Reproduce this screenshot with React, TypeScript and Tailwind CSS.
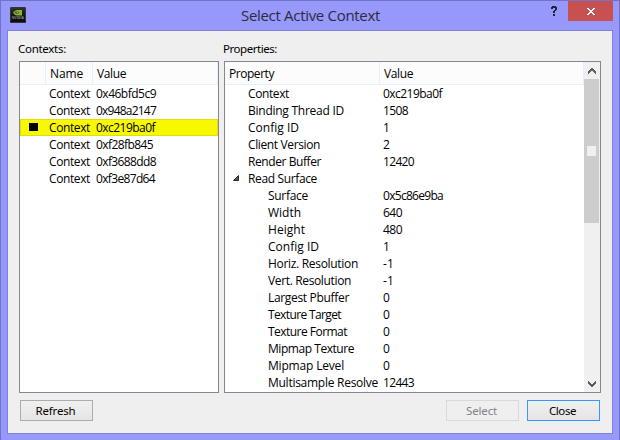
import { useLayoutEffect, useRef } from 'react';

type FitProps = { w: number; children: string; className?: string };

/* Text set to a given advance width by spreading the difference over its letters. */
function Fit({ w, children, className = '' }: FitProps) {
  const ref = useRef<HTMLSpanElement>(null);
  useLayoutEffect(() => {
    const el = ref.current;
    if (!el) return;
    el.style.letterSpacing = '0px';
    const natural = el.getBoundingClientRect().width;
    el.style.letterSpacing = `${(w - natural) / children.length}px`;
  }, [w, children]);
  return (
    <span ref={ref} className={`inline-block shrink-0 whitespace-pre ${className}`}>
      {children}
    </span>
  );
}

const contexts: [string, number][] = [
  ['0x46bfd5c9', 60],
  ['0x948a2147', 60],
  ['0xc219ba0f', 59],
  ['0xf28fb845', 57],
  ['0xf3688dd8', 60],
  ['0xf3e87d64', 59],
];

type Prop = { name: string; w: number; value?: string; vw?: number; child?: boolean };

const rows: Prop[] = [
  { name: 'Context', w: 41, value: '0xc219ba0f', vw: 59 },
  { name: 'Binding Thread ID', w: 96, value: '1508', vw: 25 },
  { name: 'Config ID', w: 51, value: '1', vw: 6 },
  { name: 'Client Version', w: 72, value: '2', vw: 6 },
  { name: 'Render Buffer', w: 73, value: '12420', vw: 31 },
  { name: 'Read Surface', w: 69 },
  { name: 'Surface', w: 40, value: '0x5c86e9ba', vw: 60 },
  { name: 'Width', w: 33, value: '640', vw: 19 },
  { name: 'Height', w: 37, value: '480', vw: 19 },
  { name: 'Config ID', w: 51, value: '1', vw: 6 },
  { name: 'Horiz. Resolution', w: 90, value: '-1', vw: 11 },
  { name: 'Vert. Resolution', w: 83, value: '-1', vw: 11 },
  { name: 'Largest Pbuffer', w: 81, value: '0', vw: 6 },
  { name: 'Texture Target', w: 73, value: '0', vw: 6 },
  { name: 'Texture Format', w: 79, value: '0', vw: 6 },
  { name: 'Mipmap Texture', w: 86, value: '0', vw: 6 },
  { name: 'Mipmap Level', w: 76, value: '0', vw: 6 },
  { name: 'Multisample Resolve', w: 110, value: '12443', vw: 31 },
];
const properties = rows.map((p, i) => ({ ...p, child: i > 5 }));

function Logo() {
  return (
    <svg width="16" height="16" viewBox="0 0 16 16" className="mt-[7px] ml-[10px] shrink-0">
      <defs>
        <linearGradient id="badge" x1="0" y1="0" x2="0" y2="1">
          <stop offset="0" stopColor="#343634" />
          <stop offset="0.5" stopColor="#151715" />
          <stop offset="1" stopColor="#0a0b0a" />
        </linearGradient>
      </defs>
      <rect width="16" height="16" rx="1.5" fill="url(#badge)" />
      <rect x="0.5" y="0.5" width="15" height="15" rx="1" fill="none" stroke="#333633" />
      <path d="M3 5.500Q5 3 7 3H12V8.500H7Q4.500 8.500 3 5.500Z" fill="#8aad3c" />
      <path d="M4.500 5.500Q7 3.500 9.500 6Q7.500 8 4.500 5.500Z" fill="#3c5213" />
      <path d="M6.500 5L8.500 6.500" stroke="#a9c95c" />
      <text x="2" y="12" fontSize="3.400" fontWeight="700" fill="#8c908c" fontFamily="Liberation Sans, sans-serif" textLength="12">
        NVIDIA
      </text>
    </svg>
  );
}

function Arrow({ down = false }: { down?: boolean }) {
  return (
    <svg width="8" height="6" viewBox="0 0 8 6" shapeRendering="crispEdges" className={down ? 'rotate-180' : ''}>
      <path d="M3 0H5V1H6V2H7V3H8V6H7V5H6V4H5V3H3V4H2V5H1V6H0V3H1V2H2V1H3Z" fill="#606060" />
    </svg>
  );
}

function Button({ label, w, kind }: { label: string; w: number; kind: 'normal' | 'disabled' | 'default' }) {
  const look = {
    normal: 'border-[#acacac] bg-linear-to-b from-[#f0f0f0] to-[#e5e5e5] text-black',
    disabled: 'border-[#d9d9d9] bg-[#efefef] text-[#838383]',
    default: 'border-[#3399ff] bg-linear-to-b from-[#f0f0f0] to-[#e5e5e5] text-black',
  }[kind];
  return (
    <button
      className={`flex h-[21px] w-[73px] items-center justify-center border pt-px pr-[2px] font-['Noto_Sans','Open_Sans',sans-serif] text-[11.5px] leading-none ${look}`}
    >
      <Fit w={w}>{label}</Fit>
    </button>
  );
}

export default function App() {
  return (
    <div className="flex h-[440px] w-[620px] flex-col overflow-hidden border-x border-t border-[#7173c5] bg-[#9698fb] font-['Open_Sans','Noto_Sans',sans-serif] text-[12px] text-black">
      <div className="flex h-[29px] shrink-0">
        <div className="flex w-[240px] items-start">
          <div className="-mt-px -ml-px flex">
            <Logo />
          </div>
        </div>
        <div className="flex h-[29px] grow items-center text-[15px] text-[#2b2b3c]">
          <Fit w={139}>Select Active Context</Fit>
        </div>
        <svg width="6" height="10" viewBox="0 0 6 10" shapeRendering="crispEdges" className="mt-[5px] mr-[11px] shrink-0">
          <path d="M1 0H5V1H6V4H5V5H4V7H2V5H3V4H4V2H2V3H0V1H1ZM2 8H4V10H2Z" fill="#222233" />
        </svg>
        <div className="mr-[6px] flex h-5 w-[45px] shrink-0 items-center justify-center bg-[#c75050] pl-px">
          <svg width="8" height="7" viewBox="0 0 8 7" shapeRendering="crispEdges">
            <path d="M0 0H2V1H3V2H5V1H6V0H8V1H7V2H6V3H5V4H6V5H7V6H8V7H6V6H5V5H3V6H2V7H0V6H1V5H2V4H3V3H2V2H1V1H0Z" fill="#fff" />
          </svg>
        </div>
      </div>

      <div className="mx-[6px] flex h-[404px] shrink-0 flex-col border border-[#8081d8] bg-[#efefef] pr-[11px] pl-[11px]">
        <div className="flex h-[30px] shrink-0 items-center pt-[6px] font-['Noto_Sans','Open_Sans',sans-serif] text-[11.5px] leading-none">
          <div className="w-[204px]">
            <Fit w={48} className="-ml-px">Contexts:</Fit>
          </div>
          <Fit w={54}>Properties:</Fit>
        </div>

        <div className="flex h-[332px] shrink-0 gap-[5px]">
          <div className="flex w-[200px] shrink-0 flex-col border border-[#828790] bg-white">
            <div className="flex h-[23px] shrink-0 items-center border-r border-b border-[#e5f0ff] bg-[#fcfcfc] leading-[24px]">
              <div className="h-[22px] w-[26px] border-r border-[#e5f0ff]" />
              <div className="h-[22px] w-[47px] border-r border-[#e5f0ff] pl-1">
                <Fit w={33}>Name</Fit>
              </div>
              <div className="h-[22px] pl-1">
                <Fit w={29}>Value</Fit>
              </div>
            </div>
            {contexts.map(([value, w], i) => (
              <div
                key={value}
                className={`flex h-[17px] shrink-0 items-center leading-[17px] ${i === 2 ? 'bg-[#f8f800] outline -outline-offset-1 outline-[#dede10]' : ''}`}
              >
                <div className="flex w-[29px] items-center pl-[9px]">
                  {i === 2 && <div className="-mt-px h-2 w-[9px] bg-black" />}
                </div>
                <div className="w-[47px]">
                  <Fit w={41}>Context</Fit>
                </div>
                <Fit w={w}>{value}</Fit>
              </div>
            ))}
          </div>

          <div className="flex w-[377px] shrink-0 border border-[#828790] bg-white">
            <div className="flex w-[359px] shrink-0 flex-col">
              <div className="flex h-[23px] shrink-0 border-r border-b border-[#e5f0ff] bg-[#fcfcfc] leading-[24px]">
                <div className="h-[22px] w-[155px] border-r border-[#e5f0ff] pl-1">
                  <Fit w={45}>Property</Fit>
                </div>
                <div className="pl-1">
                  <Fit w={29}>Value</Fit>
                </div>
              </div>
              {properties.map((p, i) => (
                <div key={i} className="flex h-[17px] shrink-0 items-center leading-[17px]">
                  <div className={`flex shrink-0 items-center pl-2 ${p.child ? 'w-[43px]' : 'w-[23px]'}`}>
                    {!p.value && (
                      <svg width="6" height="6" viewBox="0 0 6 6" className="-mt-px">
                        <path d="M5.500 0.500V5.500H0.500Z" fill="#595959" stroke="#262626" />
                      </svg>
                    )}
                  </div>
                  <div className={`shrink-0 ${p.child ? 'w-[115px]' : 'w-[135px]'}`}>
                    <Fit w={p.w}>{p.name}</Fit>
                  </div>
                  {p.value && <Fit w={p.vw ?? 6}>{p.value}</Fit>}
                </div>
              ))}
            </div>
            <div className="flex w-4 shrink-0 flex-col bg-[#f0f0f0]">
              <div className="flex h-[17px] shrink-0 items-center pt-px pl-[4px]">
                <Arrow />
              </div>
              <div className="flex h-[144px] w-[15px] shrink-0 items-center justify-center bg-[#cdcdcd]">
                <div className="h-[10px] w-[9px] bg-[#f0f0f0]" />
              </div>
              <div className="grow" />
              <div className="flex h-[17px] shrink-0 items-center pl-[4px]">
                <Arrow down />
              </div>
            </div>
          </div>
        </div>

        <div className="flex pt-[7px] pl-px">
          <Button label="Refresh" w={40} kind="normal" />
          <div className="ml-[353px] flex gap-2">
            <Button label="Select" w={31} kind="disabled" />
            <Button label="Close" w={27} kind="default" />
          </div>
        </div>
      </div>
    </div>
  );
}
